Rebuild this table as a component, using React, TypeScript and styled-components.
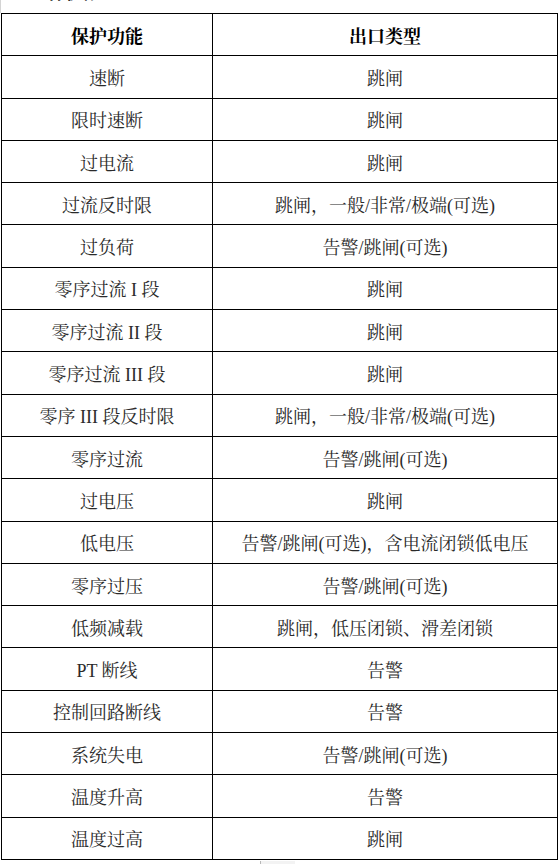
import React from 'react'
import styled, { createGlobalStyle } from 'styled-components'

const GlobalStyle = createGlobalStyle`
  html, body {
    margin: 0;
    padding: 0;
    background: #fff;
  }
  body {
    font-family: 'Liberation Serif', 'Noto Serif CJK SC', 'Noto Sans CJK SC', serif;
  }
`

const Page = styled.div`
  width: 558px;
  height: 864px;
  overflow: hidden;
  display: flex;
  flex-direction: column;
`

const CaptionStrip = styled.div`
  height: 13px;
  overflow: hidden;
  border-left: 1px solid #d4d4d4;
  box-sizing: border-box;
  width: 12px;
  position: relative;
  flex-shrink: 0;
  overflow: visible;
`

const Caption = styled.div`
  position: absolute;
  left: 47px;
  top: -17px;
  font-size: 18px;
  font-weight: bold;
  color: #222;
  white-space: nowrap;
  line-height: 20px;
`

const Table = styled.table`
  margin-left: 1px;
  width: 556px;
  border-collapse: collapse;
  table-layout: fixed;
  flex-shrink: 0;
`

const HeadCell = styled.th`
  border: 1px solid #000;
  height: 41.3px;
  padding: 0;
  font-size: 18px;
  font-weight: bold;
  color: #000;
  text-align: center;
  vertical-align: middle;
`

const Cell = styled.td`
  border: 1px solid #000;
  height: 41.3px;
  padding: 0;
  font-size: 18px;
  color: #2a2a2a;
  text-align: center;
  vertical-align: middle;
  white-space: nowrap;
`

const PageMark = styled.div`
  margin-left: 260px;
  margin-top: 1px;
  width: 34px;
  height: 6px;
  background: #f3f3f3;
  border-left: 1px solid #b8b8b8;
  flex-shrink: 0;
`

const rows: [string, string][] = [
  ['速断', '跳闸'],
  ['限时速断', '跳闸'],
  ['过电流', '跳闸'],
  ['过流反时限', '跳闸，一般/非常/极端(可选)'],
  ['过负荷', '告警/跳闸(可选)'],
  ['零序过流 I 段', '跳闸'],
  ['零序过流 II 段', '跳闸'],
  ['零序过流 III 段', '跳闸'],
  ['零序 III 段反时限', '跳闸，一般/非常/极端(可选)'],
  ['零序过流', '告警/跳闸(可选)'],
  ['过电压', '跳闸'],
  ['低电压', '告警/跳闸(可选)，含电流闭锁低电压'],
  ['零序过压', '告警/跳闸(可选)'],
  ['低频减载', '跳闸，低压闭锁、滑差闭锁'],
  ['PT 断线', '告警'],
  ['控制回路断线', '告警'],
  ['系统失电', '告警/跳闸(可选)'],
  ['温度升高', '告警'],
  ['温度过高', '跳闸'],
]

export default function App() {
  return (
    <Page>
      <GlobalStyle />
      <CaptionStrip>
        <Caption>保护配</Caption>
      </CaptionStrip>
      <Table>
        <colgroup>
          <col style={{ width: 211 }} />
          <col style={{ width: 345 }} />
        </colgroup>
        <thead>
          <tr>
            <HeadCell>保护功能</HeadCell>
            <HeadCell>出口类型</HeadCell>
          </tr>
        </thead>
        <tbody>
          {rows.map(([fn, out]) => (
            <tr key={fn}>
              <Cell>{fn}</Cell>
              <Cell>{out}</Cell>
            </tr>
          ))}
        </tbody>
      </Table>
      <PageMark />
    </Page>
  )
}
